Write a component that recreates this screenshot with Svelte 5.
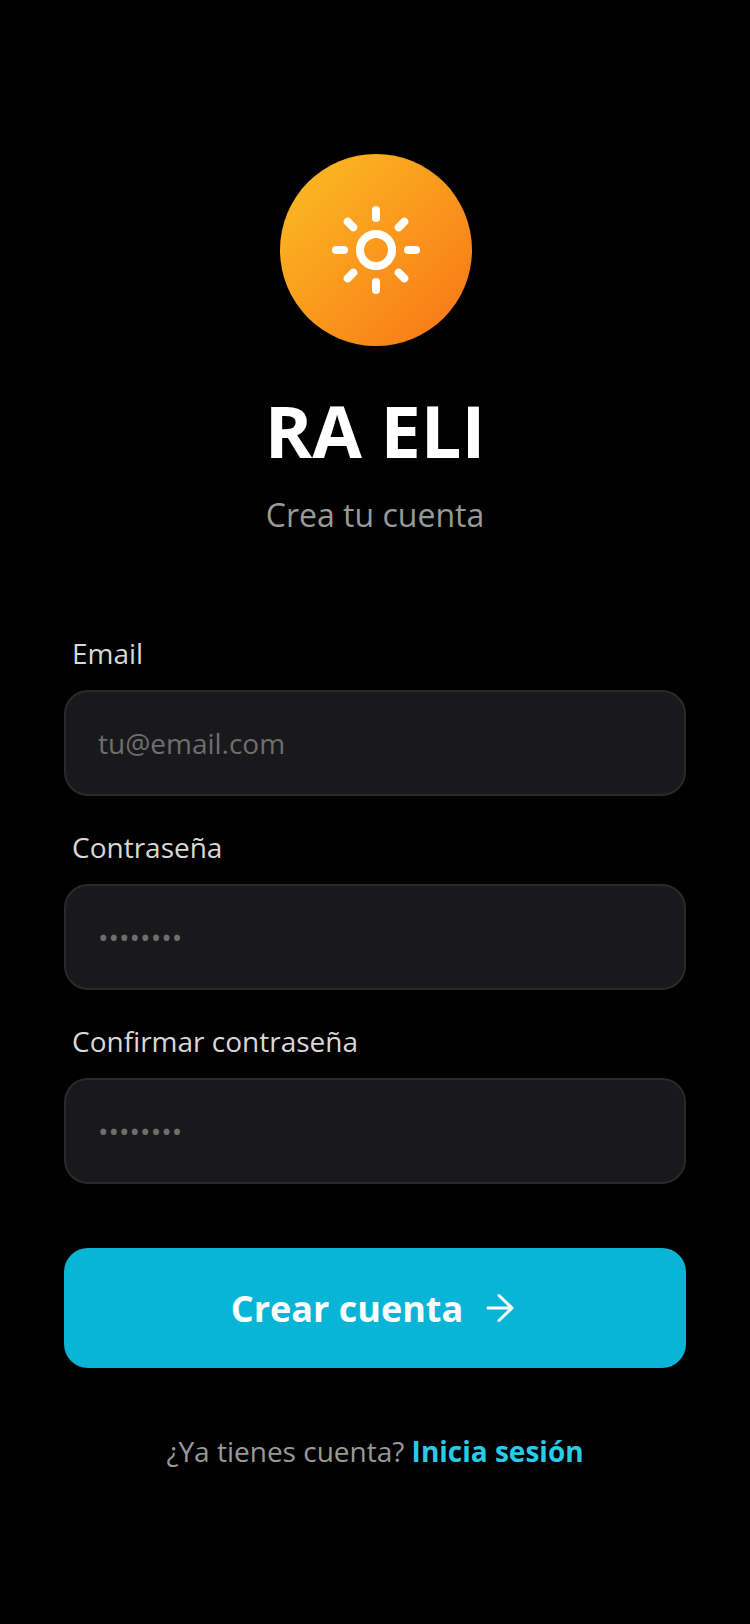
<script>
	const fields = [
		{ label: 'Email', type: 'email', placeholder: 'tu@email.com' },
		{ label: 'Contraseña', type: 'password', placeholder: '••••••••' },
		{ label: 'Confirmar contraseña', type: 'password', placeholder: '••••••••' }
	];
</script>

<main class="page">
	<header class="brand">
		<div class="logo">
			<svg width="88" height="88" viewBox="0 0 88 88" fill="none" stroke="#fff" stroke-width="8" stroke-linecap="round">
				<circle cx="44" cy="44" r="16" />
				<path d="M44 4v8M44 76v8M4 44h8M76 44h8M15.700 15.700l5.600 5.600M72.300 15.700l-5.600 5.600M15.700 72.300l5.600-5.600M72.300 72.300l-5.600-5.600" />
			</svg>
		</div>
		<h1>RA ELI</h1>
		<p class="subtitle">Crea tu cuenta</p>
	</header>

	<form class="form">
		{#each fields as field}
			<label class="field">
				<span>{field.label}</span>
				<input type={field.type} placeholder={field.placeholder} />
			</label>
		{/each}

		<button type="button" class="submit">
			Crear cuenta
			<svg width="32" height="32" viewBox="0 0 32 32" fill="none" stroke="#fff" stroke-width="3" stroke-linecap="round" stroke-linejoin="round">
				<path d="M4 16h24M15 3.500 28 16 15 28.500" />
			</svg>
		</button>
	</form>

	<p class="footer">¿Ya tienes cuenta? <a href="#login">Inicia sesión</a></p>
</main>

<style>
	:global(body) {
		background: #000;
	}

	.page {
		box-sizing: border-box;
		min-height: 1624px;
		padding: 154px 64px 0;
		background: #000;
		font-family: 'Open Sans', sans-serif;
	}

	.brand {
		display: flex;
		flex-direction: column;
		align-items: center;
	}

	.logo {
		display: flex;
		align-items: center;
		justify-content: center;
		width: 192px;
		height: 192px;
		margin-left: 2px;
		border-radius: 50%;
		background: linear-gradient(135deg, #fbbf24, #f97316);
	}

	h1 {
		margin: 36px 0 0;
		color: #fff;
		font-size: 72px;
		font-weight: 700;
		line-height: 96px;
	}

	.subtitle {
		margin: 15px 0 0;
		color: #999;
		font-size: 32px;
		line-height: 44px;
	}

	.form {
		display: flex;
		flex-direction: column;
		margin-top: 97px;
	}

	.field {
		display: flex;
		flex-direction: column;
		gap: 18px;
		margin-bottom: 32px;
	}

	.field span {
		padding-left: 8px;
		color: #d8d8d8;
		font-size: 28px;
		line-height: 38px;
	}

	input {
		box-sizing: border-box;
		width: 100%;
		height: 106px;
		padding: 0 32px;
		border: 2px solid #2a2a2c;
		border-radius: 24px;
		outline: none;
		background: #19191b;
		color: #fff;
		font: inherit;
		font-size: 28px;
	}

	input::placeholder {
		color: #6e6e6e;
		opacity: 1;
	}

	.submit {
		display: flex;
		align-items: center;
		justify-content: center;
		gap: 21px;
		height: 120px;
		margin-top: 32px;
		padding: 0 3px 0 0;
		border: 0;
		border-radius: 24px;
		background: #08b5d6;
		color: #fff;
		font: inherit;
		font-size: 36px;
		font-weight: 700;
	}

	.footer {
		margin: 63px 0 0;
		color: #999;
		font-size: 28px;
		line-height: 40px;
		text-align: center;
	}

	.footer a {
		color: #28cbe8;
		font-weight: 700;
		text-decoration: none;
	}
</style>
